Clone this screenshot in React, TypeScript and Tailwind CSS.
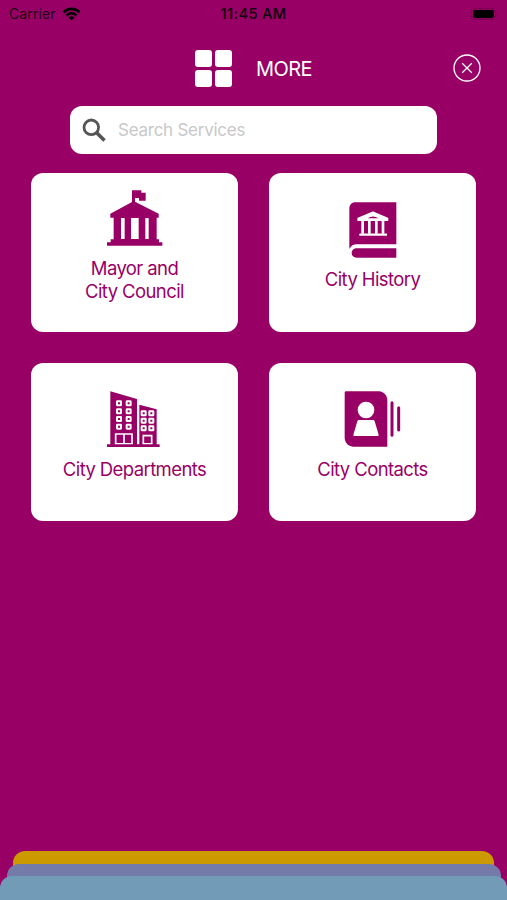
import React from 'react';

const MayorIcon = () => (
  <svg width="56" height="56" viewBox="51 30 168 168" fill="currentColor">
    <path d="M126 31H154V38H167V62H147V54H135V65L206 101V113H200V178H207V187H217V197H51V187H62V178H71V113H61V101L126 66Z" />
    <path fill="white" d="M93 114H104V177H93ZM123 114H146V177H123ZM166 114H176V177H166Z" />
  </svg>
);

const HistoryIcon = () => (
  <svg width="48" height="56" viewBox="57 35 144 168" fill="currentColor">
    <path d="M77 36H199V162H80C70 162 64 166 58 176V55C58 44 65 36 77 36Z" />
    <path d="M80 174H199V202H80C60 202 60 174 80 174Z" />
    <path fill="white" stroke="white" strokeWidth="4" strokeLinejoin="round" d="M84 84L129 65L173 84V90H84Z" />
    <path d="M113 84Q129 73 145 84Z" />
    <g fill="none" stroke="white">
      <path strokeWidth="8" d="M98 90V130M118 90V130M139 90V130M159 90V130" />
      <path strokeWidth="7" strokeLinecap="round" d="M91 133H168" />
    </g>
  </svg>
);

const TOWER_WINDOWS = [
  [87, 70], [116, 70], [87, 94], [116, 94], [87, 117], [116, 117], [87, 140], [116, 140],
  [161, 100], [184, 100], [161, 122], [184, 122], [161, 145], [184, 145],
];

const DepartmentsIcon = () => (
  <svg className="mr-[2px]" width="53" height="56" viewBox="51 33 159 168" fill="currentColor">
    <path d="M61 34L141 57V194H61ZM148 74L200 88V194H148ZM51 193H209V201H51Z" />
    <g fill="none" stroke="white" strokeWidth="6">
      {TOWER_WINDOWS.map(([x, y]) => (
        <rect key={`${x}-${y}`} x={x - 6} y={y - 6} width="12" height="12" rx="1" />
      ))}
      <path strokeWidth="5" d="M77 192V162H126V192M102 162V192M160 192V167H185V192" />
      <path strokeWidth="4" d="M75 191H128M158 191H187" />
    </g>
  </svg>
);

const ContactsIcon = () => (
  <svg width="57" height="56" viewBox="43 33 171 168" fill="currentColor">
    <path d="M49 34H148C163 36 172 46 173 60V200H70C55 198 46 189 45 174V38Q45 34 49 34Z" />
    <circle cx="109" cy="90" r="25" fill="white" />
    <path fill="white" d="M88 120H130Q134 120 135 124L147 164Q148 168 143 168H75Q70 168 71 164L83 124Q84 120 88 120Z" />
    <path fill="none" stroke="currentColor" strokeWidth="9" strokeLinecap="round" d="M187 68V166M207 83V150" />
  </svg>
);

const services = [
  { lines: ['Mayor and', 'City Council'], icon: <MayorIcon /> },
  { lines: ['City History'], icon: <HistoryIcon /> },
  { lines: ['City Departments'], icon: <DepartmentsIcon /> },
  { lines: ['City Contacts'], icon: <ContactsIcon /> },
];

const StatusBar = () => (
  <div className="grid h-[27px] shrink-0 grid-cols-3 items-center px-[9px] text-[14px] leading-none text-black/85">
    <div className="flex items-center gap-[6px]">
      <span className="tracking-[0.1px]">Carrier</span>
      <svg width="19" height="14" viewBox="0 0 18 14" fill="none" stroke="black" strokeWidth="2.6">
        <path d="M1 5.2C5.5 .8 12.5 .8 17 5.2" />
        <path d="M4.1 8.5C7 5.7 11 5.7 13.9 8.5" />
        <path fill="black" stroke="none" d="M6 10.5Q9 8 12 10.5L9 13.5Z" />
      </svg>
    </div>
    <span className="pt-[2px] text-center text-[14.5px] font-semibold tracking-[0.35px] whitespace-nowrap">11:45 AM</span>
    <div className="flex items-center justify-end gap-px">
      <div className="h-[12px] w-[25px] rounded-[3px] border border-black/20 p-px">
        <div className="h-full rounded-[2px] bg-black" />
      </div>
      <div className="h-1 w-px rounded-r bg-black/20" />
    </div>
  </div>
);

const App: React.FC = () => {
  return (
    <div className="flex h-screen flex-col overflow-hidden bg-[#990066] font-['Inter','Liberation_Sans',sans-serif]">
      <StatusBar />

      <header className="flex h-[79px] shrink-0 items-center pt-[3px] pr-[26px] pl-[195px] text-white">
        <div className="grid grid-cols-2 gap-[3px]">
          <div className="h-[17px] w-[17px] rounded-[3px] bg-white" />
          <div className="h-[17px] w-[17px] rounded-[3px] bg-white" />
          <div className="h-[17px] w-[17px] rounded-[3px] bg-white" />
          <div className="h-[17px] w-[17px] rounded-[3px] bg-white" />
        </div>
        <h1 className="ml-[24px] pt-px text-[20px] leading-none tracking-[-0.6px]">MORE</h1>
        <button className="ml-auto" aria-label="Close">
          <svg width="28" height="28" viewBox="0 0 28 28" fill="none" stroke="currentColor" strokeWidth="1.3">
            <circle cx="14" cy="14" r="13" />
            <path d="M9.2 9.2L18.8 18.8M18.8 9.2L9.2 18.8" />
          </svg>
        </button>
      </header>

      <div className="mx-auto flex h-[48px] w-[367px] shrink-0 items-center rounded-[12px] bg-white pl-[12px]">
        <svg width="24" height="24" viewBox="0 0 24 24" fill="none" stroke="#555555">
          <circle cx="9.3" cy="9.3" r="7.3" strokeWidth="2.8" />
          <path strokeWidth="3.6" d="M14.4 14.4L22.5 22.5" />
        </svg>
        <input
          className="ml-[12px] w-[260px] bg-transparent pt-[2px] text-[17px] tracking-[-0.25px] outline-none placeholder:text-[#c8c8c8]"
          placeholder="Search Services"
        />
      </div>

      <main className="mt-[19px] grid grid-cols-[207px_207px] justify-center gap-x-[31px] gap-y-[31px]">
        {services.map((service) => (
          <button
            key={service.lines[0]}
            className="flex h-[158.5px] flex-col items-center justify-center gap-[10.5px] rounded-[12px] bg-white pb-[12px] text-[#990066]"
          >
            {service.icon}
            <span className="text-[18.5px] leading-[23px] tracking-[-0.6px] whitespace-nowrap">
              {service.lines.map((line) => (
                <span key={line} className="block">{line}</span>
              ))}
            </span>
          </button>
        ))}
      </main>

      {/* Stacked section tabs */}
      <footer className="mt-auto flex shrink-0 flex-col items-center">
        <div className="h-[25px] w-[481px] rounded-t-[12px] bg-[#cc9900]" />
        <div className="-mt-[12px] h-[24px] w-[494px] rounded-t-[12px] bg-[#757ba8]" />
        <div className="-mt-[12px] h-[24px] w-full rounded-t-[12px] bg-[#729bb7]" />
      </footer>
    </div>
  );
};

export default App;
